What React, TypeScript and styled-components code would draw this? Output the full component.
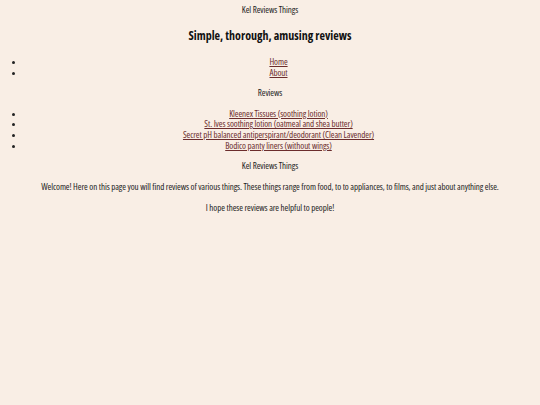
import styled, { createGlobalStyle } from 'styled-components';

const GlobalStyle = createGlobalStyle`
  html, body {
    background: #f9eee5;
  }
  body {
    margin: 5px 8px;
    font-family: "Open Sans", "Liberation Sans", sans-serif;
    font-stretch: 75%;
    font-size: 9px;
    letter-spacing: -0.08px;
    line-height: 10.8px;
    color: #222;
    text-align: center;
  }
`;

const navLinks = ['Home', 'About'];

const reviews = [
  'Kleenex Tissues (soothing lotion)',
  'St. Ives soothing lotion (oatmeal and shea butter)',
  'Secret pH balanced antiperspirant/deodorant (Clean Lavender)',
  'Bodico panty liners (without wings)',
];

const App = () => {
  return (
    <>
      <GlobalStyle />
      <S.Page>
        <S.SiteName>Kel Reviews Things</S.SiteName>
        <S.Title>Simple, thorough, amusing reviews</S.Title>
        <S.List>
          {navLinks.map((link) => (
            <S.Item key={link}>
              <S.Link href="#">{link}</S.Link>
            </S.Item>
          ))}
        </S.List>
        <S.Text>Reviews</S.Text>
        <S.List>
          {reviews.map((review) => (
            <S.Item key={review}>
              <S.Link href="#">{review}</S.Link>
            </S.Item>
          ))}
        </S.List>
        <S.Text>Kel Reviews Things</S.Text>
        <S.Text>
          Welcome! Here on this page you will find reviews of various things. These things range from food, to to
          appliances, to films, and just about anything else.
        </S.Text>
        <S.Text>I hope these reviews are helpful to people!</S.Text>
      </S.Page>
    </>
  );
};

export default App;

const S = {
  Page: styled.main`
    display: block;
  `,

  SiteName: styled.p`
    margin: 0 0 12.5px;
  `,

  Title: styled.h1`
    margin: 0 0 12.5px;
    font-size: 12px;
    letter-spacing: 0;
    line-height: 16px;
    font-weight: 700;
    color: #111;
  `,

  List: styled.ul`
    margin: 0 0 9.6px;
    padding-left: 0;
  `,

  Item: styled.li`
    list-style: disc;
    list-style-position: outside;
    margin-left: 17px;
  `,

  Link: styled.a`
    color: #6b2c2c;
    text-decoration: underline;
  `,

  Text: styled.p`
    margin: 0 0 9.8px;
  `,
};
